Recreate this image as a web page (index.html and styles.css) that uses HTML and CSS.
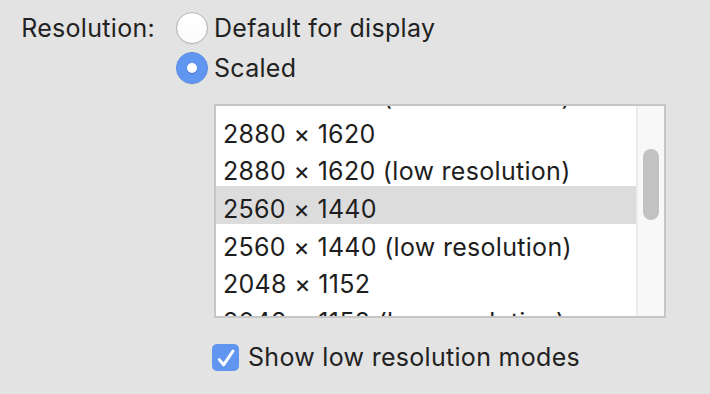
FILE: index.html
```html
<!DOCTYPE html>
<html>
<head>
<meta charset="utf-8">
<link rel="stylesheet" href="styles.css">
</head>
<body>
<div class="pane">
  <div class="label">Resolution:</div>
  <div class="controls">
    <div class="radio-row">
      <span class="radio"></span>
      <span class="opt">Default for display</span>
    </div>
    <div class="radio-row">
      <span class="radio on"><span class="dot"></span></span>
      <span class="opt">Scaled</span>
    </div>
    <div class="listbox">
      <div class="list">
        <div class="rows">
          <div class="row">3008 × 1692 (low resolution)</div>
          <div class="row">2880 × 1620</div>
          <div class="row">2880 × 1620 (low resolution)</div>
          <div class="row sel">2560 × 1440</div>
          <div class="row">2560 × 1440 (low resolution)</div>
          <div class="row">2048 × 1152</div>
          <div class="row">2048 × 1152 (low resolution)</div>
        </div>
      </div>
      <div class="scrollbar"><div class="thumb"></div></div>
    </div>
    <div class="check-row">
      <span class="checkbox">
        <svg viewBox="0 0 27 27" width="27" height="27"><path d="M7.3 15.6 L11.6 20.8 L21 7" fill="none" stroke="#fff" stroke-width="3" stroke-linecap="round" stroke-linejoin="round"/></svg>
      </span>
      <span class="opt">Show low resolution modes</span>
    </div>
  </div>
</div>
</body>
</html>
```

FILE: styles.css
```css
html, body {
  margin: 0;
  padding: 0;
}
body {
  width: 710px;
  height: 394px;
  overflow: hidden;
  background: #e3e3e3;
  font-family: Inter, "Liberation Sans", Arial, sans-serif;
  font-size: 25px;
  letter-spacing: 0.3px;
  color: #222;
}
.pane {
  display: flex;
  padding-top: 12px;
}
.label {
  width: 155px;
  text-align: right;
  line-height: 32px;
  height: 32px;
  margin-right: 21px;
}
.controls {
  display: flex;
  flex-direction: column;
}
.radio-row {
  display: flex;
  align-items: center;
  gap: 6px;
  height: 32px;
  line-height: 32px;
  margin-bottom: 7.5px;
}
.radio {
  width: 32px;
  height: 32px;
  box-sizing: border-box;
  border-radius: 50%;
  background: linear-gradient(#ffffff, #fbfbfb);
  border: 1px solid #b3b3b3;
  box-shadow: 0 0.5px 1px rgba(0,0,0,0.08);
  display: flex;
  align-items: center;
  justify-content: center;
}
.radio.on {
  background: #6096ef;
  border-color: #5a8fe6;
}
.dot {
  width: 10px;
  height: 10px;
  border-radius: 50%;
  background: #fff;
  box-shadow: 0 1px 1px rgba(0,0,0,0.2);
}
.listbox {
  margin-top: 13px;
  margin-left: 38px;
  width: 452px;
  height: 214px;
  box-sizing: border-box;
  border: 2px solid #c6c6c6;
  background: #fff;
  display: flex;
}
.list {
  flex: 1;
  overflow: hidden;
  position: relative;
}
.rows {
  margin-top: -33.1px;
}
.row {
  height: 37.7px;
  box-sizing: border-box;
  padding: 8px 0 0 7px;
  line-height: 30px;
  white-space: nowrap;
  color: #1e1e1e;
}
.row.sel {
  background: #dcdcdc;
}
.scrollbar {
  width: 28px;
  background: #f8f8f8;
  border-left: 2px solid #ececec;
  box-sizing: border-box;
  padding: 43px 0 0 5px;
}
.thumb {
  width: 16px;
  height: 71px;
  border-radius: 8px;
  background: #c2c2c2;
}
.check-row {
  display: flex;
  align-items: center;
  gap: 9px;
  margin-top: 26px;
  margin-left: 36px;
  height: 27px;
  line-height: 27px;
}
.checkbox {
  width: 27px;
  height: 27px;
  border-radius: 5px;
  background: #6096ef;
  display: block;
}
.checkbox svg {
  display: block;
}
```
